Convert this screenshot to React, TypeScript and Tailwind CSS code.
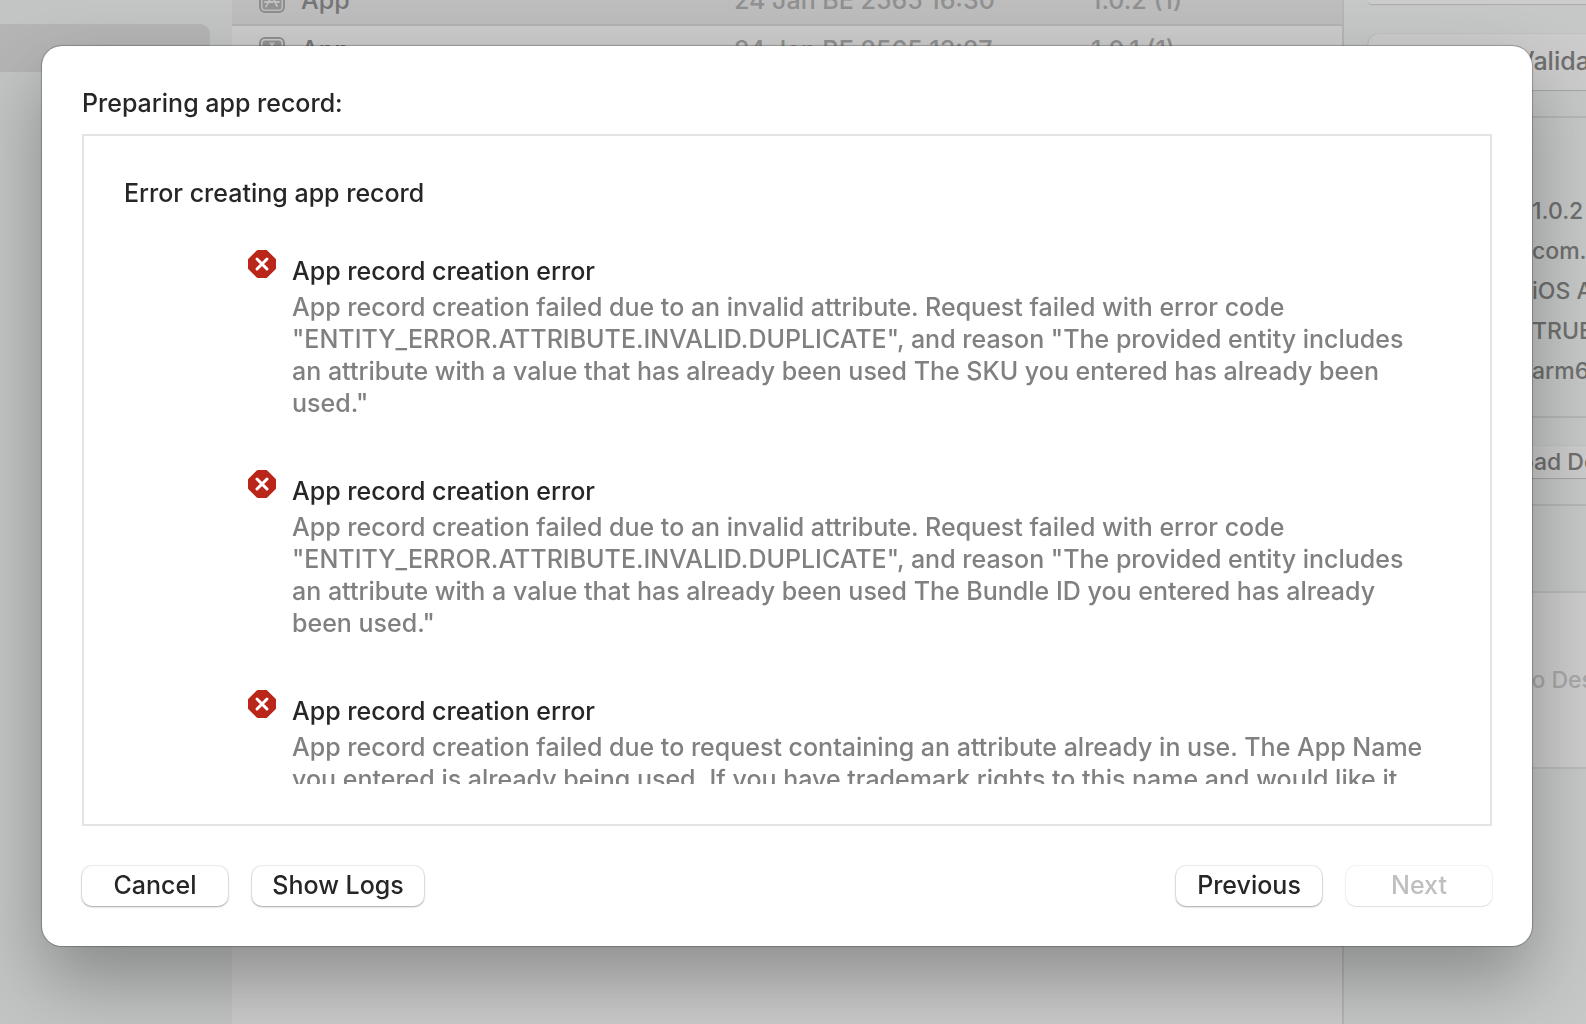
import React from "react";

const archives = [
  { name: "App", date: "24 Jan BE 2565 16:30", version: "1.0.2 (1)", selected: true },
  { name: "App", date: "24 Jan BE 2565 13:27", version: "1.0.1 (1)", selected: false },
];

const details = ["1.0.2 (1)", "com.test.app", "iOS App Archive", "TRUE", "arm64"];

const errors = [
  'App record creation failed due to an invalid attribute. Request failed with error code "ENTITY_ERROR.ATTRIBUTE.INVALID.DUPLICATE", and reason "The provided entity includes an attribute with a value that has already been used The SKU you entered has already been used."',
  'App record creation failed due to an invalid attribute. Request failed with error code "ENTITY_ERROR.ATTRIBUTE.INVALID.DUPLICATE", and reason "The provided entity includes an attribute with a value that has already been used The Bundle ID you entered has already been used."',
  "App record creation failed due to request containing an attribute already in use. The App Name you entered is already being used. If you have trademark rights to this name and would like it",
];

const ArchiveIcon = () => (
  <svg width="26" height="26" viewBox="0 0 26 26" fill="none" className="block">
    <rect x="1" y="1" width="24" height="24" rx="5" stroke="#8e8e8e" strokeWidth="2" />
    <rect x="3.5" y="3.5" width="19" height="19" rx="2.5" fill="#929292" />
    <path
      d="M14.5 6 8.5 17M11.5 6l6.5 13M6 15h8M17 15h3M7.5 18.5l-.5 1"
      stroke="#c0c0c0"
      strokeWidth="1.8"
      strokeLinecap="round"
    />
  </svg>
);

const ErrorIcon = () => (
  <svg width="28" height="28" viewBox="0 0 28 28" className="block shrink-0">
    <path
      d="M9.8 1.5h8.4l8.3 8.3v8.4l-8.3 8.3H9.8l-8.3-8.3V9.8z"
      fill="#bb261a"
      stroke="#bb261a"
      strokeWidth="3"
      strokeLinejoin="round"
    />
    <path d="m9 9 10 10M19 9 9 19" stroke="#fff" strokeWidth="3" strokeLinecap="round" />
  </svg>
);

const PushButton = ({
  children,
  disabled,
  className,
}: {
  children: React.ReactNode;
  disabled?: boolean;
  className: string;
}) => (
  <button
    type="button"
    disabled={disabled}
    className={`h-10 rounded-[10px] bg-white pb-0.5 text-[25px] leading-8 text-[#262626] shadow-[0_0_1px_1px_rgba(0,0,0,0.07),0_1px_2px_rgba(0,0,0,0.3)] disabled:text-[#bfbfbf] disabled:shadow-[0_0_1px_1px_rgba(0,0,0,0.05),0_1px_1px_rgba(0,0,0,0.08)] ${className}`}
  >
    {children}
  </button>
);

const Organizer = () => (
  <div className="flex h-full">
    <nav className="w-[232px] shrink-0 bg-[#c2c5c3] pt-6">
      <div className="mr-[22px] h-12 rounded-r-[10px] bg-[#b5b5b5]" />
    </nav>

    <main className="min-w-0 grow overflow-hidden bg-[#cbcbcb]">
      <table className="-mt-[25px] w-full table-fixed text-left">
        <tbody>
          {archives.map((a) => (
            <tr
              key={a.version}
              className={`h-[50px] border-b-2 border-[#b2b2b2] ${a.selected ? "bg-[#bdbdbd]" : ""}`}
            >
              <td className="w-[502px] pl-[27px]">
                <div className="flex items-center gap-4 text-[25px] leading-8 text-[#757575]">
                  <ArchiveIcon />
                  {a.name}
                </div>
              </td>
              <td className="w-[357px] text-[25px] leading-8 text-[#909090]">{a.date}</td>
              <td className="text-[25px] leading-8 text-[#909090]">{a.version}</td>
            </tr>
          ))}
        </tbody>
      </table>
    </main>

    <aside className="w-[244px] shrink-0 overflow-hidden border-l-2 border-[#b4b6b5] bg-[#c5c8c6] text-[23px] text-[#6f6f6f]">
      <div className="w-[480px]">
        <div className="ml-6 h-1 rounded-b-[10px] bg-[#cccccc] shadow-[0_1px_1px_rgba(0,0,0,0.15)]" />
        <button
          type="button"
          className="mt-[30px] ml-6 block h-14 w-[440px] rounded-[10px] bg-[#cccccc] pb-0.5 pl-[149px] text-left text-[25px] leading-8 shadow-[0_0_1px_rgba(0,0,0,0.25),0_1px_1px_rgba(0,0,0,0.15)]"
        >
          Validate App
        </button>
        <hr className="mt-[26px] border-t-2 border-[#b5b7b6]" />
        <ul className="mt-[73px] pl-[188px] leading-10">
          {details.map((d) => (
            <li key={d}>{d}</li>
          ))}
        </ul>
        <hr className="mt-[25px] border-t-2 border-[#b5b7b6]" />
        <button
          type="button"
          className="mt-7 ml-6 block h-8 w-[440px] rounded-lg bg-[#cccccc] pl-[83px] text-left leading-8 shadow-[0_0_1px_rgba(0,0,0,0.25),0_1px_1px_rgba(0,0,0,0.15)]"
        >
          Download Debug Symbols
        </button>
        <hr className="mt-[26px] border-t-2 border-[#b5b7b6]" />
        <div className="mt-[85px] flex h-[178px] items-center border-y-2 border-[#bbbbbb] bg-[#cccccc] pl-[170px] text-[#a8a8a8]">
          No Description
        </div>
      </div>
    </aside>
  </div>
);

export default function App() {
  return (
    <div className="h-screen overflow-hidden font-[Inter,'Liberation_Sans',sans-serif] font-[450]">
      <Organizer />

      <div className="fixed inset-0 flex pt-[46px] pr-[54px] pb-[78px] pl-[42px]">
        <section
          role="dialog"
          aria-label="Preparing app record"
          className="flex min-w-0 grow flex-col rounded-[20px] bg-white p-10 text-[25px] leading-8 text-[#262626] shadow-[0_0_1px_1px_rgba(0,0,0,0.25),0_34px_72px_rgba(0,0,0,0.3)]"
        >
          <h1 className="leading-[34px] font-[450]">Preparing app record:</h1>

          <div className="mt-3.5 min-h-0 grow border-2 border-[#e4e4e4] p-10">
            <div className="h-full overflow-hidden">
              <h2 className="leading-[34px] font-[450]">Error creating app record</h2>
              <ul className="mt-10 flex flex-col gap-[51px] pr-6 pl-[124px]">
                {errors.map((message) => (
                  <li key={message} className="flex gap-4">
                    <ErrorIcon />
                    <div className="pt-[5px]">
                      <h3 className="font-[450]">App record creation error</h3>
                      <p className="mt-1 text-[#808080]">{message}</p>
                    </div>
                  </li>
                ))}
              </ul>
            </div>
          </div>

          <footer className="mt-10 flex gap-6">
            <PushButton className="w-[146px]">Cancel</PushButton>
            <PushButton className="w-[172px]">Show Logs</PushButton>
            <PushButton className="ml-auto w-[146px]">Previous</PushButton>
            <PushButton className="w-[146px]" disabled>
              Next
            </PushButton>
          </footer>
        </section>
      </div>
    </div>
  );
}
